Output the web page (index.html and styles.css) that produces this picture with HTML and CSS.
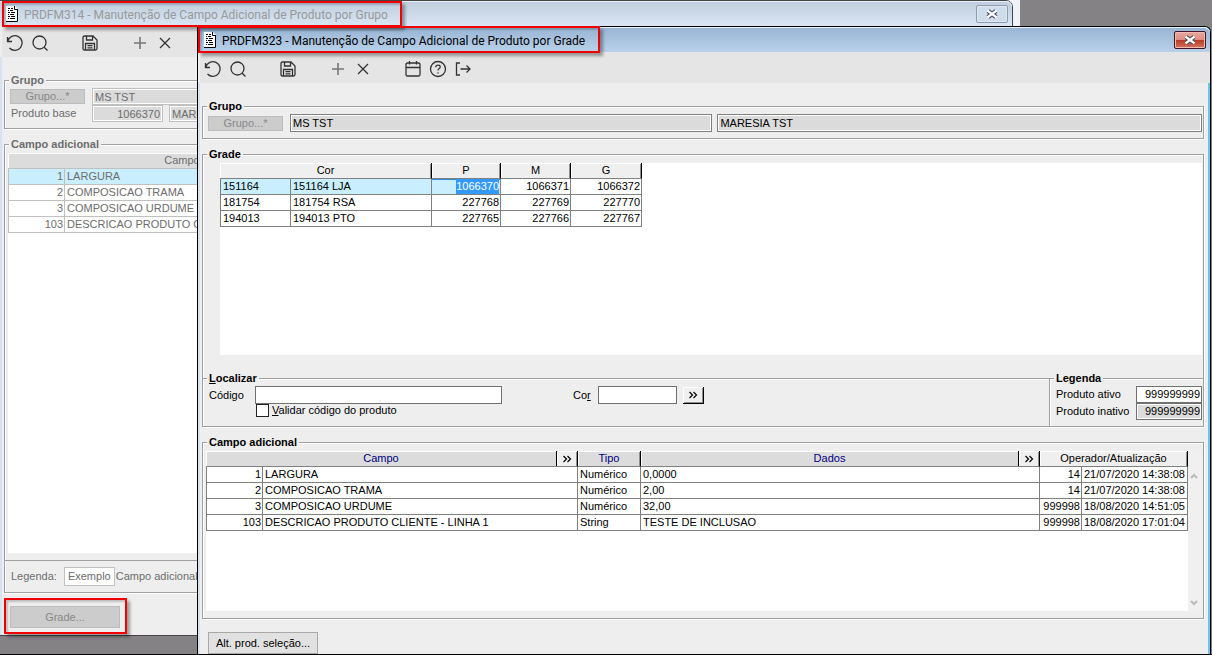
FILE: index.html
```html
<!DOCTYPE html>
<html lang="pt-BR">
<head>
    <meta charset="UTF-8">
    <meta name="viewport" content="width=device-width, initial-scale=1.0">
    <title>Manutenção de Campo Adicional de Produto</title>
    <link rel="stylesheet" href="styles.css">
</head>
<body>
    <!-- shared icons -->
    <svg class="sprite" aria-hidden="true">
        <symbol id="i-doc" viewBox="0 0 12 16">
            <path d="M0 0h9l3 3v13H0z" fill="#fff"/>
            <path d="M11.5 3v12.500H0" fill="none" stroke="#000"/>
            <path d="M8.500 0v3.500H12" fill="none" stroke="#000"/>
            <path d="M2 2.500h2M5 2.500h2M2 4.500h1M4 4.500h3M2 6.500h2M5 6.500h4M2 8.500h1M4 8.500h4M2 10.500h2M5 10.500h4M2 12.500h1M4 12.500h5" stroke="#000"/>
        </symbol>
        <symbol id="i-undo" viewBox="0 0 18 18">
            <path d="M1.5 3v4.5H6M1.8 7.2A7.3 7.3 0 1 1 3.5 14"/>
        </symbol>
        <symbol id="i-search" viewBox="0 0 18 18">
            <circle cx="8.5" cy="8.5" r="6.5"/><path d="M13.2 13.2l3.300 3.300"/>
        </symbol>
        <symbol id="i-save" viewBox="0 0 18 18">
            <path d="M2 3.5Q2 2 3.5 2H12l4 4v8.500Q16 16 14.500 16h-11Q2 16 2 14.500zM5.500 2v4h6V2M4.500 16V9.500h9V16M6.500 11.700h5M6.500 13.900h5"/>
        </symbol>
        <symbol id="i-plus" viewBox="0 0 18 18">
            <path d="M9 3v12M3 9h12" stroke="#777" stroke-width="1.6"/>
        </symbol>
        <symbol id="i-times" viewBox="0 0 18 18">
            <path d="M4 4l10 10M14 4L4 14"/>
        </symbol>
        <symbol id="i-calendar" viewBox="0 0 18 18">
            <path d="M3.500 3h11Q16 3 16 4.500v10Q16 16 14.500 16h-11Q2 16 2 14.500v-10Q2 3 3.500 3zM2 7.500h14M5.500 1v3.500M12.500 1v3.500"/>
        </symbol>
        <symbol id="i-help" viewBox="0 0 18 18">
            <circle cx="9" cy="9" r="7.500"/><path d="M6.800 7.200q0-2 2.200-2t2.200 1.800q0 1-1.200 1.700Q9 9.300 9 10.600M9 12.200v1.400"/>
        </symbol>
        <symbol id="i-exit" viewBox="0 0 18 18">
            <path d="M6 3H2.500v12H6M6.500 9h9.500M12.500 5.500L16 9l-3.500 3.500"/>
        </symbol>
        <symbol id="i-close" viewBox="0 0 14 10">
            <path d="M3 2l8 6M11 2L3 8" fill="none" stroke="#4f5368" stroke-width="4.600"/>
            <path d="M2.500 1.600l9 6.800M11.500 1.600l-9 6.800" fill="none" stroke="#fff" stroke-width="2.400"/>
        </symbol>
        <symbol id="i-chevrons" viewBox="0 0 10 8">
            <path d="M1.500 1l3 3-3 3M5.500 1l3 3-3 3" fill="none" stroke="#000" stroke-width="1.200"/>
        </symbol>
    </svg>

    <div class="desktop">
        <div class="mdi-edge"></div>

        <section class="window window-grupo">
            <header class="titlebar">
                <svg class="doc"><use href="#i-doc"/></svg>
                <h1>PRDFM314 - Manutenção de Campo Adicional de Produto por Grupo</h1>
                <button class="close" aria-label="Fechar"><svg><use href="#i-close"/></svg></button>
            </header>
            <div class="toolbar">
                <button aria-label="Desfazer"><svg><use href="#i-undo"/></svg></button>
                <button aria-label="Pesquisar"><svg><use href="#i-search"/></svg></button>
                <button class="sep" aria-label="Salvar"><svg><use href="#i-save"/></svg></button>
                <button class="sep" aria-label="Incluir"><svg><use href="#i-plus"/></svg></button>
                <button aria-label="Excluir"><svg><use href="#i-times"/></svg></button>
            </div>
            <div class="content">
                <fieldset>
                    <legend>Grupo</legend>
                    <div class="base-grid">
                        <button class="btn-grupo" disabled>Grupo...*</button>
                        <input class="field wide" type="text" value="MS TST" aria-label="Grupo" readonly>
                        <label for="produto-base">Produto base</label>
                        <input class="field num" type="text" id="produto-base" value="1066370" readonly>
                        <input class="field" type="text" value="MARESIA TST" aria-label="Marca" readonly>
                    </div>
                </fieldset>
                <fieldset class="fill">
                    <legend>Campo adicional</legend>
                    <div class="list">
                        <table class="grid grid-campos">
                            <colgroup><col class="c-num"><col class="c-nome"><col></colgroup>
                            <thead>
                                <tr><th colspan="2">Campo</th><th></th></tr>
                            </thead>
                            <tbody>
                                <tr class="current"><td class="num">1</td><td>LARGURA</td><td></td></tr>
                                <tr><td class="num">2</td><td>COMPOSICAO TRAMA</td><td></td></tr>
                                <tr><td class="num">3</td><td>COMPOSICAO URDUME</td><td></td></tr>
                                <tr><td class="num">103</td><td>DESCRICAO PRODUTO CLIENTE - LINHA 1</td><td></td></tr>
                            </tbody>
                        </table>
                    </div>
                    <div class="legend-row">
                        <span>Legenda:</span>
                        <span class="sample">Exemplo</span>
                        <span>Campo adicional</span>
                    </div>
                </fieldset>
                <button class="btn-bottom" disabled>Grade...</button>
            </div>
        </section>

        <section class="window window-grade">
            <header class="titlebar">
                <svg class="doc"><use href="#i-doc"/></svg>
                <h1>PRDFM323 - Manutenção de Campo Adicional de Produto por Grade</h1>
                <button class="close" aria-label="Fechar"><svg><use href="#i-close"/></svg></button>
            </header>
            <div class="toolbar">
                <button aria-label="Desfazer"><svg><use href="#i-undo"/></svg></button>
                <button aria-label="Pesquisar"><svg><use href="#i-search"/></svg></button>
                <button class="sep" aria-label="Salvar"><svg><use href="#i-save"/></svg></button>
                <button class="sep" aria-label="Incluir"><svg><use href="#i-plus"/></svg></button>
                <button aria-label="Excluir"><svg><use href="#i-times"/></svg></button>
                <button class="sep" aria-label="Calendário"><svg><use href="#i-calendar"/></svg></button>
                <button aria-label="Ajuda"><svg><use href="#i-help"/></svg></button>
                <button aria-label="Sair"><svg><use href="#i-exit"/></svg></button>
            </div>
            <div class="content">
                <fieldset>
                    <legend>Grupo</legend>
                    <div class="grupo-row">
                        <button class="btn-grupo" disabled>Grupo...*</button>
                        <input class="field grupo" type="text" value="MS TST" aria-label="Grupo" readonly>
                        <input class="field marca" type="text" value="MARESIA TST" aria-label="Marca" readonly>
                    </div>
                </fieldset>

                <fieldset class="open">
                    <legend>Grade</legend>
                    <div class="grade-area">
                        <table class="grid grid-grade">
                            <colgroup><col class="g-cod"><col class="g-cor"><col class="g-p"><col class="g-m"><col class="g-g"></colgroup>
                            <thead>
                                <tr><th colspan="2">Cor</th><th>P</th><th>M</th><th>G</th></tr>
                            </thead>
                            <tbody>
                                <tr class="current"><td>151164</td><td>151164 LJA</td><td class="num focus"><mark>1066370</mark></td><td class="num">1066371</td><td class="num">1066372</td></tr>
                                <tr><td>181754</td><td>181754 RSA</td><td class="num">227768</td><td class="num">227769</td><td class="num">227770</td></tr>
                                <tr><td>194013</td><td>194013 PTO</td><td class="num">227765</td><td class="num">227766</td><td class="num">227767</td></tr>
                            </tbody>
                        </table>
                    </div>
                </fieldset>
                <div class="split">
                    <fieldset class="localizar">
                        <legend><u>L</u>ocalizar</legend>
                        <div class="find">
                            <label class="l-codigo" for="codigo">Código</label>
                            <input class="box codigo" type="text" id="codigo">
                            <label class="l-cor" for="cor">Co<u>r</u></label>
                            <input class="box cor" type="text" id="cor">
                            <button class="more" aria-label="Buscar cor"><svg><use href="#i-chevrons"/></svg></button>
                        </div>
                        <label class="check"><input type="checkbox"><span><u>V</u>alidar código do produto</span></label>
                    </fieldset>
                    <fieldset class="legenda">
                        <legend>Legenda</legend>
                        <div class="key">
                            <span>Produto ativo</span><span class="swatch">999999999</span>
                            <span>Produto inativo</span><span class="swatch off">999999999</span>
                        </div>
                    </fieldset>
                </div>

                <fieldset class="fill">
                    <legend>Campo adicional</legend>
                    <div class="list">
                        <table class="grid grid-dados">
                            <colgroup><col class="c-num"><col class="c-nome"><col class="c-tipo"><col><col class="c-op"><col class="c-data"></colgroup>
                            <thead>
                                <tr>
                                    <th class="link" colspan="2"><div class="th-more"><span>Campo</span><button aria-label="Mais campos"><svg><use href="#i-chevrons"/></svg></button></div></th>
                                    <th class="link">Tipo</th>
                                    <th class="link"><div class="th-more"><span>Dados</span><button aria-label="Mais dados"><svg><use href="#i-chevrons"/></svg></button></div></th>
                                    <th colspan="2">Operador/Atualização</th>
                                </tr>
                            </thead>
                            <tbody>
                                <tr><td class="num">1</td><td>LARGURA</td><td>Numérico</td><td>0,0000</td><td class="num">14</td><td>21/07/2020 14:38:08</td></tr>
                                <tr><td class="num">2</td><td>COMPOSICAO TRAMA</td><td>Numérico</td><td>2,00</td><td class="num">14</td><td>21/07/2020 14:38:08</td></tr>
                                <tr><td class="num">3</td><td>COMPOSICAO URDUME</td><td>Numérico</td><td>32,00</td><td class="num">999998</td><td>18/08/2020 14:51:05</td></tr>
                                <tr><td class="num">103</td><td>DESCRICAO PRODUTO CLIENTE - LINHA 1</td><td>String</td><td>TESTE DE INCLUSAO</td><td class="num">999998</td><td>18/08/2020 17:01:04</td></tr>
                            </tbody>
                        </table>
                        <div class="scroll">
                            <svg viewBox="0 0 8 6"><path d="M1 5l3-3 3 3"/></svg>
                            <svg viewBox="0 0 8 6"><path d="M1 1l3 3 3-3"/></svg>
                        </div>
                    </div>
                </fieldset>
                <button class="btn-bottom">Alt. prod. seleção...</button>
            </div>
        </section>

        <!-- highlights -->
        <div class="callout callout-grupo"></div>
        <div class="callout callout-grade"></div>
        <div class="callout callout-botao"></div>
    </div>
</body>
</html>
```

FILE: styles.css
```css
* {
    box-sizing: border-box;
}
body {
    margin: 0;
    font-family: "Liberation Sans", Arial, sans-serif;
    font-size: 11px;
    line-height: 13px;
    color: #000;
}
button, input {
    font: inherit;
    color: inherit;
    margin: 0;
    border-radius: 0;
}
.sprite {
    position: absolute;
    width: 0;
    height: 0;
}
.desktop {
    position: relative;
    height: 100vh;
    overflow: hidden;
    background: #848284;
    border-bottom: 1px solid #000;
}
.mdi-edge {
    position: absolute;
    top: 0;
    left: 0;
    right: 192px;
    height: 26px;
    background: #f0f2fa;
}

/* windows */
.window {
    --text: #000;
    --line: #808080;
    position: absolute;
    display: flex;
    flex-direction: column;
    border: 1px solid #1a1a1a;
    background: #eee;
    color: var(--text);
}
.window-grupo {
    --text: #6d6d6d;
    --line: #c0c0c0;
    top: 0;
    left: -1px;
    right: 199px;
    bottom: 18px;
    border-color: #444;
    border-radius: 0 7px 0 0;
}
.window-grade {
    top: 26px;
    left: 197px;
    right: 1px;
    bottom: 0;
    border-bottom: none;
    border-color: #000;
    border-radius: 0 6px 0 0;
}
.titlebar {
    display: flex;
    align-items: center;
    height: 25px;
    padding: 0 4px 0 6px;
    border-radius: 0 6px 0 0;
    background: linear-gradient(#98b4d3, #b9d1ea);
    box-shadow: inset 0 1px #e8f2fb;
}
.window-grupo .titlebar {
    background: linear-gradient(#bfcddd, #d9e5f3);
}
.titlebar h1 {
    flex: 1;
    margin: 0 0 0 6px;
    padding-top: 2px;
    font: 12px/16px Roboto, "Noto Sans", sans-serif;
    white-space: nowrap;
}
.window-grupo h1 {
    color: #999;
}
.doc {
    width: 12px;
    height: 16px;
}
.close {
    display: flex;
    align-items: center;
    justify-content: center;
    width: 32px;
    height: 18px;
    padding: 0;
    border: 1px solid #431422;
    border-radius: 2px;
    background: linear-gradient(#e8a79c, #df8d80 48%, #b83a24 50%, #d4735e);
    box-shadow: inset 0 0 0 1px #eebdb4;
}
.close svg {
    width: 14px;
    height: 10px;
}
.window-grupo .close {
    border-color: #8d9bab;
    background: #cfdcea;
    box-shadow: inset 0 0 0 1px #dfe9f4;
}
.toolbar {
    display: flex;
    align-items: center;
    height: 31px;
    margin-left: 2px;
    padding-top: 2px;
    background: #e5e5e5;
}
.toolbar button {
    display: flex;
    align-items: center;
    justify-content: center;
    width: 25px;
    height: 25px;
    padding: 0;
    border: none;
    background: none;
}
.toolbar .sep {
    margin-left: 25px;
}
.toolbar svg {
    width: 18px;
    height: 18px;
    fill: none;
    stroke: #333;
    stroke-width: 1.3;
}
.content {
    display: flex;
    flex-direction: column;
    flex: 1;
    min-height: 0;
    padding: 17px 4px 0 2px;
    border: solid #d6e3f1;
    border-width: 0 2px;
}
.window-grade .content {
    border-right-color: #6cc4ea;
}

/* groups */
fieldset {
    min-width: 0;
    margin: 0 0 9px;
    padding: 0;
    border: 1px solid #a0a0a0;
    box-shadow: 1px 1px #fff, inset 1px 1px #fff;
}
legend {
    margin-left: 4px;
    padding: 0 2px;
    font-weight: bold;
    background: #eee;
}
fieldset.open {
    margin-bottom: -6px;
    border-bottom: none;
}
fieldset.fill {
    display: flex;
    flex-direction: column;
    flex: 1;
    min-height: 0;
    margin-bottom: 13px;
}
.field {
    min-width: 0;
    height: 18px;
    padding: 0 2px;
    border: 1px solid var(--line);
    background: #dbdbdb;
    box-shadow: inset 0 0 0 1px #fff;
}
.window-grupo .field {
    height: 17px;
}
.num {
    text-align: right;
}
.btn-grupo {
    width: 75px;
    height: 15px;
    padding: 0;
    line-height: 13px;
    border: 1px solid #bcbcbc;
    background: #ccc;
    color: #888;
}
.grupo-row {
    display: flex;
    align-items: center;
    padding: 1px 1px 6px 5px;
}
.grupo {
    flex: 422;
    margin-left: 7px;
}
.marca {
    flex: 485;
    margin-left: 5px;
}
.base-grid {
    display: grid;
    grid-template-columns: 76px 71px 1fr;
    column-gap: 6px;
    align-items: center;
    padding: 1px 1px 6px 5px;
}
.wide {
    grid-column: span 2;
}
.base-grid label {
    padding-left: 1px;
}

/* grids */
.list {
    display: flex;
    align-items: flex-start;
    flex: 1;
    min-height: 0;
    margin: 2px 1px 7px 3px;
    background: #fff;
}
.grid {
    table-layout: fixed;
    border-collapse: separate;
    border-spacing: 0;
}
.grid th, .grid td {
    height: 16px;
    padding: 0 2px;
    line-height: 15px;
    white-space: nowrap;
    overflow: hidden;
}
.grid th {
    padding: 0;
    font-weight: normal;
    background: #efefef;
    border-right: 1px solid #000;
    border-bottom: 1px solid var(--line);
    box-shadow: inset 1px 1px #fff, inset -1px 0 #909090;
}
.grid td {
    border-right: 1px solid var(--line);
    border-bottom: 1px solid var(--line);
}
.grid td:first-child {
    border-left: 1px solid var(--line);
}
.grid .num {
    padding-right: 1px;
}
.grid .current td {
    background: #c9effe;
}
.grid-campos, .grid-dados {
    flex: 1;
    width: 100%;
}
.grid-campos th, .grid .link {
    background: #dcdcdc;
}
.grid-campos th {
    border-right-color: #999;
}
.grid .link {
    color: #000080;
}
.c-num { width: 57px; }
.c-nome { width: 315px; }
.c-tipo { width: 63px; }
.c-op { width: 42px; }
.c-data { width: 106px; }
.grid-campos .c-nome { width: 292px; }
.th-more {
    display: flex;
    height: 15px;
}
.th-more span {
    flex: 1;
}
.th-more button {
    width: 21px;
    padding: 0;
    border: none;
    border-left: 1px solid #000;
    background: #efefef;
    box-shadow: inset 1px 1px #fff, inset -1px 0 #909090;
}
.th-more svg, .more svg {
    display: block;
    width: 10px;
    height: 8px;
    margin: auto;
}
.scroll {
    display: flex;
    flex-direction: column;
    align-items: center;
    justify-content: space-between;
    align-self: stretch;
    width: 14px;
    padding: 22px 2px 5px 0;
    background: #f0f0f0;
}
.scroll svg {
    width: 8px;
    height: 6px;
    fill: none;
    stroke: #bbb;
    stroke-width: 2;
}
.grade-area {
    height: 192px;
    margin: 2px 1px 23px 17px;
    background: #fff;
}
.grid-grade {
    width: 422px;
}
.g-cod { width: 71px; }
.g-cor { width: 141px; }
.g-p { width: 69px; }
.g-m { width: 70px; }
.g-g { width: 71px; }
.grid-grade .current .num {
    background: #fff;
}
.grid-grade .current .focus {
    background: #c9effe;
    box-shadow: inset 0 1px #2a8be0;
}
mark {
    display: block;
    width: fit-content;
    margin-left: auto;
    background: #3399ff;
    color: #fff;
}

/* search and key */
.split {
    display: flex;
    margin-bottom: 9px;
}
.split fieldset {
    margin: 0;
}
.localizar {
    flex: 1;
    border-right: none;
}
.legenda {
    width: 155px;
}
.find {
    display: flex;
    align-items: center;
    padding: 1px 0 0 6px;
}
.l-codigo {
    width: 46px;
}
.box {
    height: 18px;
    padding: 0 2px;
    border: 1px solid #707070;
    background: #fff;
}
.codigo {
    width: 247px;
}
.l-cor {
    width: 25px;
    margin-left: 71px;
}
.cor {
    width: 79px;
}
.more {
    width: 21px;
    height: 17px;
    margin-left: 6px;
    padding: 0;
    border: solid #000;
    border-width: 0 1px 1px 0;
    background: #efefef;
    box-shadow: inset 1px 1px #fff, inset -1px -1px #909090;
}
.check {
    display: flex;
    align-items: center;
    gap: 3px;
    margin: 0 0 9px 53px;
}
.check input {
    appearance: none;
    width: 13px;
    height: 13px;
    border: 1px solid #222;
    background: #fff;
}
.key {
    display: grid;
    grid-template-columns: 1fr 66px;
    align-items: center;
    padding: 1px 1px 6px 6px;
}
.swatch {
    height: 17px;
    padding: 1px 1px;
    text-align: right;
    border: 1px solid #707070;
    background: #fff;
}
.off {
    background: #dbdbdb;
    box-shadow: inset 0 0 0 1px #fff;
}
.legend-row {
    display: flex;
    align-items: center;
    height: 32px;
    padding-left: 6px;
    border-top: 1px solid #a0a0a0;
}
.sample {
    margin: 0 1px 0 7px;
    padding: 2px 3px;
    border: 1px solid #c0c0c0;
    background: #fff;
}
.btn-bottom {
    align-self: flex-start;
    flex: none;
    width: 110px;
    height: 22px;
    margin-left: 6px;
    padding: 0;
    border: 1px solid #a8a8a8;
    background: #e1e1e1;
}
.window-grupo .btn-bottom {
    margin-bottom: 7px;
    border-color: #bcbcbc;
    background: #ccc;
    color: #888;
}

/* red highlights over the windows */
.callout {
    position: absolute;
    border: 2px solid #f20000;
    box-shadow: 3px 3px 3px rgba(0, 0, 0, 0.35), inset 2px 2px 2px rgba(0, 0, 0, 0.2);
    pointer-events: none;
}
.callout-grupo {
    top: 1px;
    left: 2px;
    width: 400px;
    height: 26px;
}
.callout-grade {
    top: 26px;
    left: 198px;
    width: 402px;
    height: 27px;
}
.callout-botao {
    bottom: 20px;
    left: 4px;
    width: 123px;
    height: 36px;
}
```
